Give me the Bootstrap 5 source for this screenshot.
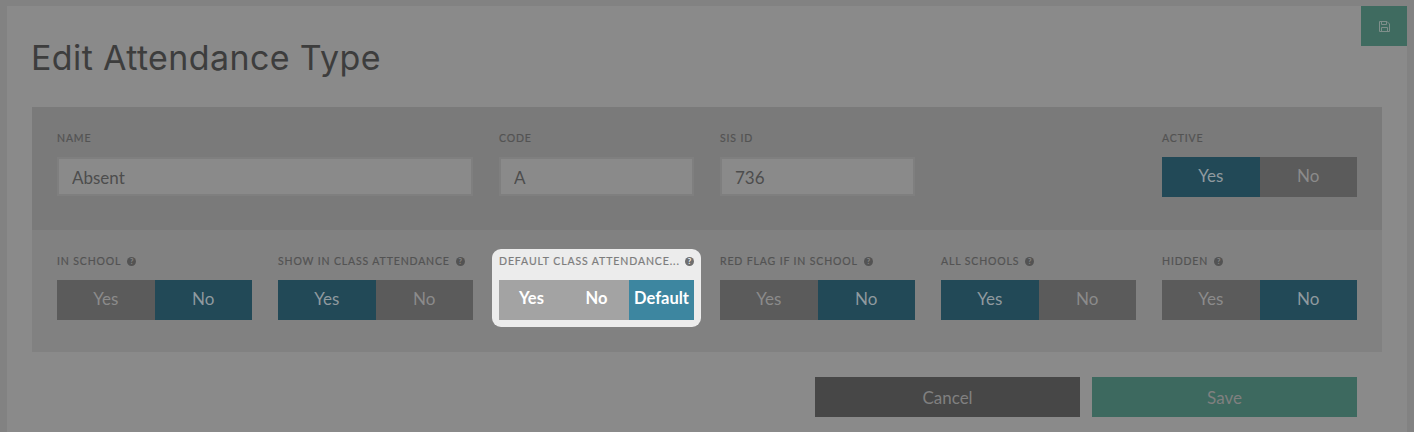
<!DOCTYPE html>
<html lang="en">
<head>
    <meta charset="UTF-8">
    <meta name="viewport" content="width=device-width, initial-scale=1.0">
    <title>Edit Attendance Type</title>
    <link href="https://cdn.jsdelivr.net/npm/bootstrap@5.3.0/dist/css/bootstrap.min.css" rel="stylesheet">
    <style>
        html, body { height: 100%; overflow: hidden; }
        body { background: #828282; font-family: "Lato", "Liberation Sans", sans-serif; padding: 6px 7px 0; }
        .sheet { background: #8a8a8a; height: 426px; position: relative; padding: 0 25px; overflow: hidden; }
        .sheet h1 { font-family: "Inter", sans-serif; font-size: 34px; line-height: 40px; font-weight: 400; letter-spacing: .38px; color: #3d3d3d; margin: 0 0 0 -1px; padding: 32px 0 29px; }
        .icon-save { position: absolute; top: 0; right: 0; width: 46px; height: 40px; background: #3f6b60; display: flex; align-items: center; justify-content: center; }
        .band { padding: 0 25px; }
        .band .row { --bs-gutter-x: 26px; }
        .band-top { background: #7a7a7a; height: 123px; padding-top: 25px; }
        .band-bottom { background: #818181; height: 122px; padding-top: 25px; }
        .field-label { font-size: 10.5px; line-height: 13px; letter-spacing: .86px; font-weight: 400; -webkit-text-stroke: .2px; color: #535353; text-transform: uppercase; margin: 0 0 12px; white-space: nowrap; display: flex; align-items: center; gap: 6px; }
        .hint { width: 9px; height: 9px; border-radius: 50%; background: #535353; color: #818181; font-size: 7.5px; line-height: 9px; font-weight: 900; text-align: center; letter-spacing: 0; flex: none; -webkit-text-stroke: 0; }
        .sheet .form-control { height: 39px; margin-top: 0; background: #8a8a8a; border: 2px solid #7f7f7f; border-radius: 0; color: #4d4d4d; font-size: 17px; padding: 1px 13px 0; letter-spacing: 0; }
        .switch { display: flex; height: 40px; }
        .switch .btn { flex: 1 1 50%; border: 0; border-radius: 0; padding: 0 0 2px; font-size: 17px; color: #8b8b8b; background: #5b5b5b; }
        .switch .btn.is-on { background: #224957; color: #8f9a9f; }
        .spot { background: #ececec; border-radius: 9px; margin: -6px -7px -7px; padding: 6px 7px 7px; position: relative; }
        .spot .field-label { color: #7d7d7d; justify-content: space-between; gap: 0; letter-spacing: .9px; }
        .spot .hint { background: #6f6f6f; color: #ececec; }
        .switch.three .btn { background: #a3a3a3; color: #fff; font-weight: 700; flex: 1 1 65px; font-size: 16.5px; padding-bottom: 4px; }
        .switch.three .btn.is-on { background: #3d86a0; color: #fff; }
        .foot { padding: 25px 25px 0 0; }
        .foot .btn { width: 265px; height: 40px; border: 0; border-radius: 0; font-size: 17px; padding: 1px 0 0; color: #808080; }
        .btn-cancel, .btn-cancel:hover { background: #474747; }
        .btn-keep, .btn-keep:hover { background: #3d695f; }
    </style>
</head>
<body>
<div class="sheet">
    <div class="icon-save">
        <svg width="11" height="11" viewBox="0 0 11 11" fill="none" stroke="#7f8f8b" stroke-width="1">
            <path d="M.5.5h7.5l2.5 2.5v7.5H.5z"/>
            <path d="M2.5.5v3h5v-3M2.5 10.500v-4h6v4"/>
        </svg>
    </div>
    <h1>Edit Attendance Type</h1>

    <div class="band band-top">
        <div class="row">
            <div class="col-4">
                <p class="field-label">Name</p>
                <input type="text" class="form-control" value="Absent">
            </div>
            <div class="col-2">
                <p class="field-label">Code</p>
                <input type="text" class="form-control" value="A">
            </div>
            <div class="col-2">
                <p class="field-label">SIS ID</p>
                <input type="text" class="form-control" value="736">
            </div>
            <div class="col-2"></div>
            <div class="col-2">
                <p class="field-label">Active</p>
                <div class="switch">
                    <button class="btn is-on">Yes</button>
                    <button class="btn">No</button>
                </div>
            </div>
        </div>
    </div>

    <div class="band band-bottom">
        <div class="row">
            <div class="col-2">
                <p class="field-label">In School <span class="hint">?</span></p>
                <div class="switch">
                    <button class="btn">Yes</button>
                    <button class="btn is-on">No</button>
                </div>
            </div>
            <div class="col-2">
                <p class="field-label">Show in Class Attendance <span class="hint">?</span></p>
                <div class="switch">
                    <button class="btn is-on">Yes</button>
                    <button class="btn">No</button>
                </div>
            </div>
            <div class="col-2">
                <div class="spot">
                    <p class="field-label">Default Class Attendance... <span class="hint">?</span></p>
                    <div class="switch three">
                        <button class="btn">Yes</button>
                        <button class="btn">No</button>
                        <button class="btn is-on">Default</button>
                    </div>
                </div>
            </div>
            <div class="col-2">
                <p class="field-label">Red Flag if in School <span class="hint">?</span></p>
                <div class="switch">
                    <button class="btn">Yes</button>
                    <button class="btn is-on">No</button>
                </div>
            </div>
            <div class="col-2">
                <p class="field-label">All Schools <span class="hint">?</span></p>
                <div class="switch">
                    <button class="btn is-on">Yes</button>
                    <button class="btn">No</button>
                </div>
            </div>
            <div class="col-2">
                <p class="field-label">Hidden <span class="hint">?</span></p>
                <div class="switch">
                    <button class="btn">Yes</button>
                    <button class="btn is-on">No</button>
                </div>
            </div>
        </div>
    </div>

    <div class="foot d-flex justify-content-end gap-2">
        <button class="btn btn-cancel">Cancel</button>
        <button class="btn btn-keep ms-1">Save</button>
    </div>
</div>
</body>
</html>
